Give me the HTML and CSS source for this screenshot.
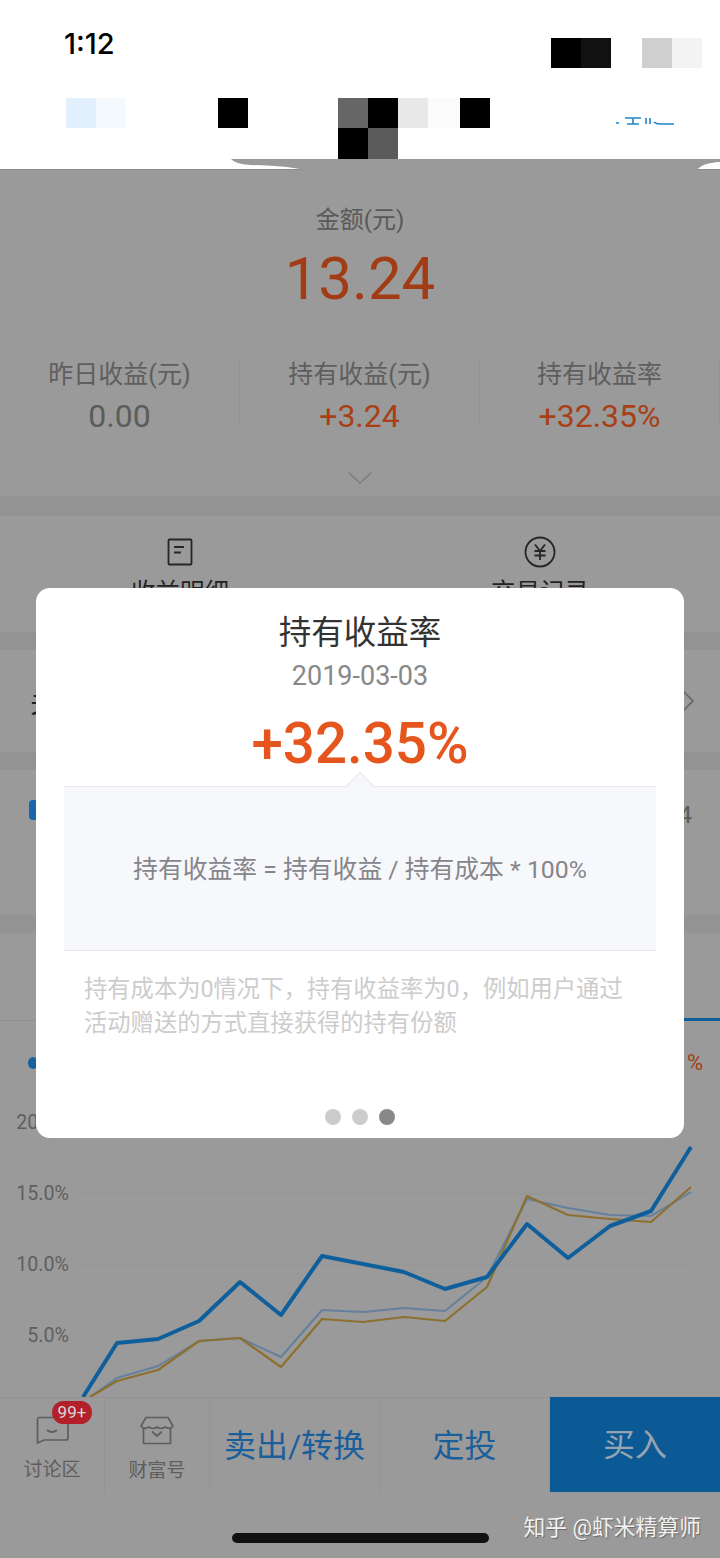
FILE: index.html
```html
<!DOCTYPE html>
<html lang="zh-CN">
<head>
  <meta charset="UTF-8">
  <title>持有收益率</title>
  <link rel="stylesheet" href="styles.css">
</head>
<body>

  <div class="page">

    <header class="top">
      <div class="status-row">
        <span class="time">1:12</span>
        <div class="mosaic status-mosaic">
          <i class="c-k"></i><i class="c-k2"></i><i class="gap"></i><i class="c-l1"></i><i class="c-l2"></i>
        </div>
      </div>
      <div class="mosaic title-mosaic">
        <i class="c-b1"></i><i class="c-b2"></i><i class="gap-a"></i><i class="c-k"></i><i class="gap-b"></i>
        <i class="c-d1"></i><i class="c-k"></i><i class="c-l3"></i><i class="c-l4"></i><i class="c-k"></i>
      </div>
      <div class="mosaic title-mosaic2">
        <i class="c-k"></i><i class="c-d2"></i>
      </div>
      <svg class="top-link" width="60" height="10" viewBox="0 0 60 10">
        <path d="M1 7h3M10 2h16M18 2v6M12 8h12M31 2v6M35 2v6M39 6q2 2 6 2h14" fill="none" stroke="#1e86c8" stroke-width="1.6"/>
      </svg>
      <svg class="top-notch" width="720" height="11" viewBox="0 0 720 11">
        <path d="M231 0H720V3Q702 4 697 11H303Q290 7 250 6Q235 5 231 0Z" fill="#9a9a9a"/>
      </svg>
    </header>

    <section class="summary">
      <div class="amount-label">金额(元)</div>
      <div class="amount">13.24</div>
      <div class="stats">
        <div class="stat">
          <div class="stat-label">昨日收益(元)</div>
          <div class="stat-value">0.00</div>
        </div>
        <div class="stat">
          <div class="stat-label">持有收益(元)</div>
          <div class="stat-value up">+3.24</div>
        </div>
        <div class="stat">
          <div class="stat-label">持有收益率</div>
          <div class="stat-value up">+32.35%</div>
        </div>
      </div>
      <svg class="chevron" width="26" height="14" viewBox="0 0 26 14">
        <path d="M1.5 1.5L13 12L24.5 1.5" fill="none" stroke="#7f7f7f" stroke-width="1.6"/>
      </svg>
    </section>

    <section class="actions">
      <div class="action">
        <svg width="26" height="28" viewBox="0 0 26 28">
          <rect x="1.5" y="1.5" width="23" height="25" rx="1" fill="none" stroke="#262626" stroke-width="1.8"/>
          <path d="M7 9h10M7 14.500h7" fill="none" stroke="#262626" stroke-width="1.8"/>
        </svg>
        <span>收益明细</span>
      </div>
      <div class="action">
        <svg width="32" height="32" viewBox="0 0 32 32">
          <circle cx="16" cy="16" r="14.5" fill="none" stroke="#262626" stroke-width="1.8"/>
          <path d="M11 8.5L16 15L21 8.5M10.5 15h11M10.5 19.5h11M16 15v9" fill="none" stroke="#262626" stroke-width="1.8"/>
        </svg>
        <span>交易记录</span>
      </div>
    </section>

    <section class="row-link">
      <span>关联基金</span>
      <svg width="14" height="24" viewBox="0 0 14 24">
        <path d="M2 2L12 12L2 22" fill="none" stroke="#666" stroke-width="1.6"/>
      </svg>
    </section>

    <section class="row-fund">
      <span class="tag">基金</span>
      <span class="fund-num">14</span>
    </section>

    <section class="chart-card">
      <div class="chart-tabs"><i class="tab-mark"></i></div>
      <div class="legend">
        <i class="legend-dot"></i>
        <span class="legend-val">%</span>
      </div>
      <svg class="chart" width="720" height="297" viewBox="0 1100 720 297">
        <path d="M80 1194H690M80 1265H690M80 1336H690" fill="none" stroke="#959595" stroke-width="1"/>
        <text x="69" y="1129" class="axis">20.0%</text>
        <text x="69" y="1200" class="axis">15.0%</text>
        <text x="69" y="1271" class="axis">10.0%</text>
        <text x="69" y="1342" class="axis">5.0%</text>
        <polyline class="line-thin" points="90,1397 117,1378 158,1366 199,1341 240,1338 281,1357 322,1310 363,1312 404,1308 445,1311 487,1277 527,1199 568,1208 610,1215 651,1216 691,1192"/>
        <polyline class="line-gold" points="90,1397 117,1381 158,1370 199,1341 240,1338 281,1367 322,1319 363,1322 404,1317 445,1321 487,1287 527,1196 568,1215 610,1219 651,1222 691,1187"/>
        <polyline class="line-main" points="83,1397 117,1343 158,1339 199,1321 240,1282 281,1315 322,1256 363,1264 404,1272 445,1289 487,1277 527,1224 568,1258 610,1226 651,1211 691,1147"/>
      </svg>
    </section>

    <nav class="bottom-bar">
      <div class="bar-icon">
        <svg width="34" height="28" viewBox="0 0 34 28">
          <path d="M4 1.500H31a2 2 0 0 1 2 2V22a2 2 0 0 1-2 2H9L2.500 27V3.500a2 2 0 0 1 1.500-2Z" fill="none" stroke="#5e5e5e" stroke-width="1.7"/>
          <path d="M12 14q5 4 10 0" fill="none" stroke="#5e5e5e" stroke-width="1.7"/>
        </svg>
        <span>讨论区</span>
        <b class="badge">99+</b>
      </div>
      <div class="bar-icon">
        <svg width="34" height="29" viewBox="0 0 34 29">
          <path d="M6 1.500H28L33 10Q30 14 25 11Q21 14 17 11Q13 14 9 11Q4 14 1 10Z" fill="none" stroke="#5e5e5e" stroke-width="1.7"/>
          <path d="M3.500 12V27.500H30.500V12M12 15.500L17 20L22 15.500" fill="none" stroke="#5e5e5e" stroke-width="1.7"/>
        </svg>
        <span>财富号</span>
      </div>
      <div class="bar-btn wide">卖出/转换</div>
      <div class="bar-btn">定投</div>
      <div class="bar-buy">买入</div>
    </nav>

    <footer class="foot">
      <div class="home-bar"></div>
      <div class="watermark">知乎 @虾米精算师</div>
    </footer>

    <div class="modal">
      <h2 class="modal-title">持有收益率</h2>
      <div class="modal-date">2019-03-03</div>
      <div class="modal-value">+32.35%</div>
      <div class="formula-box">持有收益率 = 持有收益 / 持有成本 * 100%</div>
      <p class="modal-note">持有成本为0情况下&#65292;持有收益率为0&#65292;例如用户通过活动赠送的方式直接获得的持有份额</p>
      <div class="dots"><i></i><i></i><i class="on"></i></div>
    </div>

  </div>

</body>
</html>
```

FILE: styles.css
```css
body {
  margin: 0;
  background: #9a9a9a;
  font-family: "Roboto", "Noto Sans CJK SC", sans-serif;
}

.page {
  position: relative;
  width: 720px;
  height: 1558px;
  overflow: hidden;
  background: #9a9a9a;
}

/* top white part */
.top {
  position: relative;
  height: 170px;
  background: #fff;
  border-bottom: 1px solid #8c8c8c;
  box-sizing: border-box;
}

.status-row {
  display: flex;
  justify-content: space-between;
  height: 98px;
  box-sizing: border-box;
  padding: 38px 18px 0 64px;
}

.time {
  font-family: "Inter", sans-serif;
  font-size: 29px;
  font-weight: 500;
  line-height: 12px;
  color: #000;
}

.mosaic {
  display: flex;
  position: relative;
  z-index: 2;
}

.mosaic i {
  display: block;
  width: 30px;
  height: 30px;
}

.status-mosaic i.gap { width: 31px; }
.title-mosaic { padding-left: 66px; }
.title-mosaic i.gap-a { width: 92px; }
.title-mosaic i.gap-b { width: 90px; }
.title-mosaic i.c-l4 { width: 32px; }
.title-mosaic2 { padding-left: 338px; height: 31px; }
.title-mosaic2 i { height: 31px; }

.c-k { background: #000; }
.c-k2 { background: #111; }
.c-l1 { background: #cfcfcf; }
.c-l2 { background: #f3f3f3; }
.c-b1 { background: #e2f0fd; }
.c-b2 { background: #f4f9fe; }
.c-d1 { background: #666; }
.c-d2 { background: #5a5a5a; }
.c-l3 { background: #e8e8e8; }
.c-l4 { background: #fbfbfb; }

.top-link {
  position: absolute;
  left: 615px;
  top: 116px;
}

.top-notch {
  position: absolute;
  left: 0;
  top: 159px;
}

/* summary */
.summary {
  height: 327px;
  text-align: center;
  border-bottom: 1px solid #939393;
  box-sizing: border-box;
  box-shadow: 0 18px 0 #939393;
}

.amount-label {
  padding-top: 33px;
  font-size: 24px;
  line-height: 34px;
  color: #595959;
}

.amount {
  font-size: 60px;
  font-weight: 400;
  line-height: 72px;
  margin-top: 6px;
  color: #a23c14;
}

.stats {
  display: flex;
  margin-top: 43px;
}

.stat {
  flex: 1;
  height: 66px;
  border-right: 1px solid #939393;
}

.stat-label {
  font-size: 25px;
  line-height: 34px;
  color: #5e5e5e;
}

.stat-value {
  font-size: 32px;
  font-weight: 400;
  line-height: 40px;
  margin-top: 4px;
  color: #5c5c5c;
}

.stat-value.up {
  color: #a83f16;
}

.chevron {
  display: block;
  margin: 47px auto 0;
}

/* sections */
.actions,
.row-link,
.row-fund {
  border-bottom: 18px solid #939393;
}

.actions {
  display: flex;
  margin-top: 18px;
  height: 135px;
  box-sizing: border-box;
  border-top: 1px solid #949494;
}

.action {
  flex: 1;
  display: flex;
  flex-direction: column;
  align-items: center;
  padding-top: 20px;
  font-size: 24.500px;
  color: #222;
}

.action svg {
  height: 32px;
  margin-bottom: 5px;
}

.row-link {
  display: flex;
  justify-content: space-between;
  align-items: center;
  height: 120px;
  box-sizing: border-box;
  padding: 0 25px 0 30px;
  font-size: 28px;
  color: #222;
}

.row-fund {
  display: flex;
  justify-content: space-between;
  height: 163px;
  box-sizing: border-box;
  padding: 30px 28px 0 29px;
}

.tag {
  height: 20px;
  padding: 0 8px;
  border-radius: 4px;
  background: #1a65ad;
  font-size: 14px;
  line-height: 20px;
  color: #9a9a9a;
}

.fund-num {
  font-size: 24px;
  line-height: 30px;
  color: #5c5c5c;
}

/* chart */
.chart-card {
  height: 464px;
}

.chart-tabs {
  position: relative;
  height: 88px;
  border-bottom: 1px solid #8e8e8e;
  box-sizing: border-box;
}

.tab-mark {
  position: absolute;
  right: 0;
  bottom: -1px;
  width: 37px;
  height: 3px;
  background: #0f5f9c;
}

.legend {
  display: flex;
  justify-content: space-between;
  align-items: center;
  height: 79px;
  padding: 4px 17px 0 28px;
  box-sizing: border-box;
}

.legend-dot {
  width: 10px;
  height: 12px;
  border-radius: 50%;
  background: #14629f;
}

.legend-val {
  font-size: 22px;
  color: #a33c14;
}

.chart {
  display: block;
}

.axis {
  font-size: 19.700px;
  fill: #5f5f5f;
  text-anchor: end;
}

.chart polyline {
  fill: none;
  stroke-linejoin: round;
}

.line-main { stroke: #0f5f9c; stroke-width: 4; }
.line-gold { stroke: #8d7030; stroke-width: 2.2; }
.line-thin { stroke: #65809c; stroke-width: 2; }

/* bottom bar */
.bottom-bar {
  display: flex;
  height: 95px;
  border-top: 1px solid #929292;
  box-sizing: border-box;
}

.bar-icon {
  position: relative;
  width: 105px;
  display: flex;
  flex-direction: column;
  align-items: center;
  padding-top: 18px;
  box-sizing: border-box;
  border-right: 1px solid #939393;
  font-size: 19px;
  line-height: 26px;
  color: #5e5e5e;
}

.bar-icon svg {
  margin-bottom: 13px;
}

.badge {
  position: absolute;
  left: 52px;
  top: 3px;
  width: 40px;
  height: 23px;
  border-radius: 12px;
  background: #b3202a;
  font-size: 17px;
  font-weight: 400;
  line-height: 23px;
  text-align: center;
  color: #d8d8d8;
}

.bar-btn {
  width: 170px;
  box-sizing: border-box;
  border-right: 1px solid #939393;
  text-align: center;
  font-size: 32px;
  line-height: 96px;
  color: #1a5f9a;
}

.bar-buy {
  flex: 1;
  margin-top: -1px;
  background: #0b5a96;
  text-align: center;
  font-size: 32px;
  line-height: 97px;
  color: #97a3ae;
}

/* bottom of the screen */
.foot {
  position: relative;
  height: 66px;
}

.home-bar {
  position: absolute;
  left: 232px;
  top: 41px;
  width: 257px;
  height: 10px;
  border-radius: 5px;
  background: #111;
}

.watermark {
  position: absolute;
  right: 19px;
  top: 20px;
  font-size: 21.800px;
  line-height: 32px;
  color: #f2f2f2;
  text-shadow: 1px 1px 1px #666;
}

/* dialog */
.modal {
  position: absolute;
  left: 36px;
  top: 588px;
  width: 648px;
  height: 550px;
  box-sizing: border-box;
  padding: 0 28px;
  background: #fff;
  border-radius: 14px;
  text-align: center;
}

.modal-title {
  margin: 0;
  padding-top: 23px;
  font-size: 32.500px;
  font-weight: 400;
  line-height: 44px;
  color: #333;
}

.modal-date {
  font-size: 27px;
  line-height: 34px;
  margin-top: 4px;
  color: #888;
}

.modal-value {
  font-size: 56.500px;
  font-weight: 500;
  line-height: 64px;
  margin-top: 19px;
  color: #e5561f;
}

.formula-box {
  position: relative;
  height: 165px;
  margin-top: 10px;
  box-sizing: border-box;
  border-top: 1px solid #e8e8e8;
  border-bottom: 1px solid #e8e8e8;
  background: #f7f8fb;
  font-size: 24.800px;
  line-height: 165px;
  color: #85858a;
}

.formula-box::before {
  content: "";
  position: absolute;
  left: 50%;
  top: -11px;
  width: 20px;
  height: 20px;
  margin-left: -10px;
  background: #f7f8fb;
  border-top: 1px solid #e8e8e8;
  border-left: 1px solid #e8e8e8;
  box-sizing: border-box;
  transform: rotate(45deg);
}

.modal-note {
  margin: 21px 0 0;
  padding: 0 20px;
  text-align: left;
  font-size: 23.300px;
  line-height: 34px;
  color: #ccc;
}

.dots {
  display: flex;
  justify-content: center;
  gap: 11px;
  margin-top: 69px;
}

.dots i {
  width: 16px;
  height: 16px;
  border-radius: 50%;
  background: #ccc;
}

.dots i.on {
  background: #888;
}
```
